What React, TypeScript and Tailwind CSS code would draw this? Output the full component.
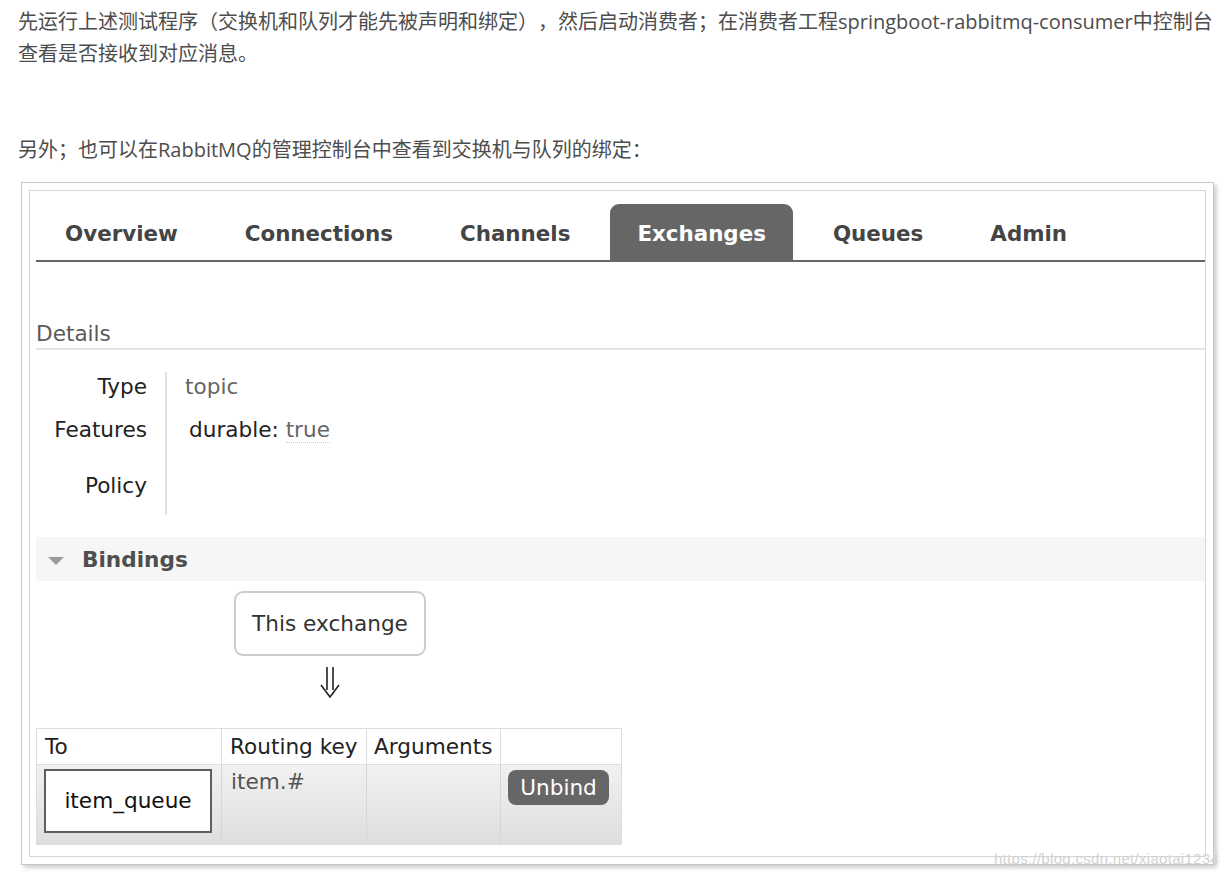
const tabs = ["Overview", "Connections", "Channels", "Exchanges", "Queues", "Admin"];

function Tabs() {
  return (
    <div className="flex items-end gap-[13px] border-b-2 border-[#666] pl-[2px] text-[21.4px]">
      {tabs.map((t) =>
        t == "Exchanges" ? (
          <div
            key={t}
            className="h-[56px] px-[27px] pt-[3px] flex items-center rounded-t-[9px] bg-[#666] text-white font-bold"
          >
            {t}
          </div>
        ) : (
          <div key={t} className="h-[56px] px-[27px] pt-[3px] flex items-center text-[#444] font-bold">
            {t}
          </div>
        )
      )}
    </div>
  );
}

function Details() {
  return (
    <div>
      <div className="mt-[59px] pt-[1px] pb-[2px] border-b-2 border-[#e4e4e4] text-[#5a5a5a] leading-6">
        Details
      </div>
      <div className="mt-[22px] flex">
        <div className="w-[129px] pr-[18px] text-right text-[#222]">
          <div className="h-[36px] pt-[3px] leading-6">Type</div>
          <div className="h-[50px] pt-[10px] leading-6">Features</div>
          <div className="h-[57px] pt-[16px] leading-6">Policy</div>
        </div>
        <div className="border-l-2 border-[#e0e0e0] pl-[18px]">
          <div className="h-[36px] pt-[3px] leading-6 text-[#666]">topic</div>
          <div className="h-[50px] pt-[10px] leading-6 pl-[4px] text-[#222]">
            durable:{" "}
            <span className="text-[#666] border-b border-dotted border-[#ccc]">true</span>
          </div>
          <div className="h-[57px]" />
        </div>
      </div>
    </div>
  );
}

function Bindings() {
  return (
    <div>
      <div className="mt-[22px] h-[44px] bg-[#f6f6f6] flex items-center pl-[12px] pt-[2px]">
        <svg width="16" height="10" viewBox="0 0 16 10" className="mt-[1px]">
          <polygon points="0,1 16,1 8,9" fill="#9a9a9a" />
        </svg>
        <span className="ml-[18px] font-bold text-[#4e4e4e]">Bindings</span>
      </div>

      <div className="mt-[10px] ml-[198px] w-[192px] h-[65px] border-2 border-[#ccc] rounded-[9px] flex items-center justify-center text-[#333]">
        This exchange
      </div>
      <div className="mt-[10px] ml-[282px] w-[24px] h-[32px]">
        <svg width="24" height="32" viewBox="0 0 24 32">
          <path
            d="M9 1 V24 M15 1 V24 M3 19 L12 31 L21 19"
            fill="none"
            stroke="#222"
            strokeWidth="1.6"
            strokeLinejoin="miter"
          />
        </svg>
      </div>

      <div className="mt-[30px] w-[586px] border border-[#ddd]">
        <div className="grid grid-cols-[184px_145px_134px_1fr] h-[35px] bg-white text-[#222] leading-6">
          <div className="pl-[8px] pt-[6px]">To</div>
          <div className="pl-[8px] pt-[6px] border-l border-[#ddd]">Routing key</div>
          <div className="pl-[7px] pt-[6px] border-l border-[#ddd]">Arguments</div>
          <div className="border-l border-[#ddd]" />
        </div>
        <div className="grid grid-cols-[184px_145px_134px_1fr] h-[80px] border-t border-[#ddd] bg-linear-to-b from-[#f1f1f1] to-[#dedede] leading-6">
          <div className="pl-[7px] pt-[4px]">
            <div className="w-[168px] h-[64px] border-2 border-[#5e5e5e] bg-white flex items-center justify-center text-[#111]">
              item_queue
            </div>
          </div>
          <div className="pl-[9px] pt-[5px] border-l border-[#d6d6d6] text-[#555]">item.#</div>
          <div className="border-l border-[#d6d6d6]" />
          <div className="pl-[7px] pt-[5px] border-l border-[#d6d6d6]">
            <div className="w-[101px] h-[35px] rounded-[8px] bg-[#666] text-white flex items-center justify-center">
              Unbind
            </div>
          </div>
        </div>
      </div>
    </div>
  );
}

export default function App() {
  return (
    <div className="w-[1230px] min-h-[873px] bg-white">
      <div
        className="pl-[18px] pt-[6px] text-[20px] leading-[32px] text-[#4d4d4d] [text-spacing-trim:space-all]"
        style={{ fontFamily: '"Open Sans", "Noto Sans CJK SC", sans-serif' }}
      >
        <div className="whitespace-nowrap">
          先运行上述测试程序（交换机和队列才能先被声明和绑定），然后启动消费者；在消费者工程springboot-rabbitmq-consumer中控制台
        </div>
        <div className="whitespace-nowrap">查看是否接收到对应消息。</div>
        <div className="h-[64px]" />
        <div className="whitespace-nowrap">另外；也可以在RabbitMQ的管理控制台中查看到交换机与队列的绑定：</div>
      </div>

      <div className="relative mt-[16px] ml-[21px] w-[1193px] border border-[#c6c6c6] p-[7px] shadow-[3px_3px_4px_rgba(0,0,0,0.18)]">
        <div
          className="border border-[#d6d6d6] pl-[6px] pt-[13px] pb-[11px] text-[21.6px] leading-6"
          style={{ fontFamily: '"DejaVu Sans", Verdana, sans-serif' }}
        >
          <Tabs />
          <Details />
          <Bindings />
        </div>
        <div
          className="absolute right-[-6px] bottom-[-4px] text-[15px] leading-[18px] text-[#d2d2d2] tracking-[0.3px]"
          style={{ fontFamily: '"Liberation Sans", Arial, sans-serif' }}
        >
          https://blog.csdn.net/xiaotai1234
        </div>
      </div>
    </div>
  );
}
